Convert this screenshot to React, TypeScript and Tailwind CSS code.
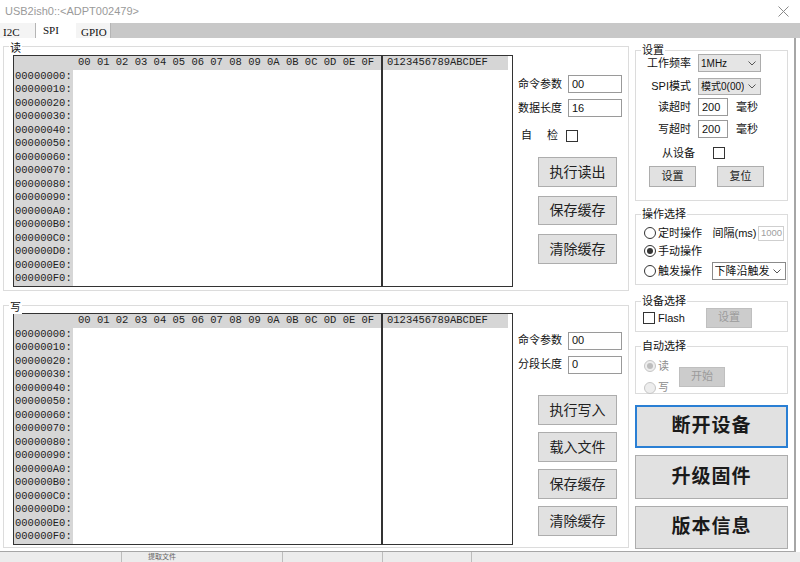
import type { ReactNode } from 'react'

const HEADER = Array.from({ length: 16 }, (_, i) => i.toString(16).toUpperCase().padStart(2, '0')).join(' ')
const ADDRS = Array.from({ length: 16 }, (_, i) => (i * 16).toString(16).toUpperCase().padStart(8, '0') + ':')

function Group({
  label,
  className = '',
  labelClass = '-top-[8px]',
  children,
}: {
  label: string
  className?: string
  labelClass?: string
  children?: ReactNode
}) {
  return (
    <div className={`relative border border-[#dcdcdc] ${className}`}>
      <span className={`absolute left-[5px] bg-white px-[1px] text-[11px] leading-[14px] text-[#111] ${labelClass}`}>
        {label}
      </span>
      {children}
    </div>
  )
}

function Btn({ children, className = '', disabled = false }: { children: ReactNode; className?: string; disabled?: boolean }) {
  return (
    <button
      className={`flex shrink-0 items-center justify-center border leading-none ${
        disabled ? 'border-[#bfbfbf] bg-[#cccccc] text-[#9b9b9b]' : 'border-[#adadad] bg-[#e1e1e1] text-[#222]'
      } ${className}`}
    >
      {children}
    </button>
  )
}

function Field({ value, className = '', disabled = false }: { value: string; className?: string; disabled?: boolean }) {
  return (
    <div
      className={`flex shrink-0 items-center overflow-hidden whitespace-nowrap border bg-white ${
        disabled ? 'border-[#cfcfcf] pl-[2px] text-[9.5px] text-[#a0a0a0]' : 'border-[#9a9a9a] pl-[3px] text-[11px]'
      } ${className}`}
    >
      {value}
    </div>
  )
}

function Checkbox({ className = '' }: { className?: string }) {
  return <span className={`block h-[12px] w-[12px] shrink-0 border border-[#333] bg-white ${className}`} />
}

function Radio({ checked = false, disabled = false }: { checked?: boolean; disabled?: boolean }) {
  return (
    <span
      className={`flex h-[12px] w-[12px] shrink-0 items-center justify-center rounded-full border ${
        disabled ? 'border-[#c6c6c6] bg-[#ededed]' : 'border-[#333] bg-white'
      }`}
    >
      {checked && <span className={`h-[6px] w-[6px] rounded-full ${disabled ? 'bg-[#bdbdbd]' : 'bg-[#333]'}`} />}
    </span>
  )
}

function Chevron() {
  return (
    <svg width="8" height="5" viewBox="0 0 8 5" className="shrink-0">
      <path d="M0.5 0.5 L4 4 L7.5 0.5" fill="none" stroke="#555" strokeWidth="1" />
    </svg>
  )
}

function Combo({ value, className = '', flat = false }: { value: string; className?: string; flat?: boolean }) {
  return (
    <div
      className={`flex shrink-0 items-center justify-between whitespace-nowrap border pl-[2px] pr-[4px] ${
        flat ? 'border-[#8a8a8a] bg-white text-[11px]' : 'border-[#acacac] bg-[#e5e5e5] text-[10px]'
      } ${className}`}
    >
      <span className="overflow-hidden">{value}</span>
      <Chevron />
    </div>
  )
}

// hex dump grid + ascii column
function HexView() {
  return (
    <div className="flex shrink-0 font-['Liberation_Mono',monospace] text-[10.5px] text-[#222]">
      <div className="flex h-[232px] w-[369px] border border-[#333] bg-white">
        <div className="flex w-[59px] flex-col bg-[#d6d6d6]">
          <div className="h-[13.5px] shrink-0" />
          {ADDRS.map((a) => (
            <div key={a} className="h-[13.5px] shrink-0 pl-[1px] leading-[13.5px]">
              {a}
            </div>
          ))}
        </div>
        <div className="flex-1">
          <div className="h-[13.5px] whitespace-pre bg-[#d6d6d6] pl-[5px] leading-[13.5px]">{HEADER}</div>
        </div>
      </div>
      <div className="h-[232px] w-[131px] border border-[#333] bg-white">
        <div className="mr-[4px] h-[13.5px] bg-[#d6d6d6] pl-[4px] leading-[13.5px]">0123456789ABCDEF</div>
      </div>
    </div>
  )
}

function BigButton({ children, focused = false, className = '' }: { children: ReactNode; focused?: boolean; className?: string }) {
  return (
    <button
      className={`flex w-[153px] items-center justify-center bg-[#e1e1e1] text-[19px] font-bold tracking-[1px] text-[#1a1a1a] ${
        focused ? 'border-2 border-[#2a7fd4]' : 'border border-[#adadad]'
      } ${className}`}
    >
      {children}
    </button>
  )
}

export default function App() {
  return (
    <div className="flex h-[562px] w-[800px] flex-col overflow-hidden bg-white font-['Liberation_Sans','Noto_Sans_CJK_SC',sans-serif] text-[#111]">
      {/* title bar */}
      <div className="flex h-[23px] shrink-0 items-center justify-between pl-[5px] pr-[11px]">
        <span className="text-[11px] text-[#9a9a9a]">USB2ish0::&lt;ADPT002479&gt;</span>
        <svg width="11" height="11" viewBox="0 0 11 11">
          <path d="M0.5 0.5 L10.5 10.5 M10.5 0.5 L0.5 10.5" stroke="#8a8a8a" strokeWidth="1" />
        </svg>
      </div>

      {/* tabs */}
      <div className="flex h-[15px] shrink-0 bg-[#c8c8c8] font-['Liberation_Serif',serif] text-[11px] leading-[12px] text-[#111]">
        <div className="w-[36px] border-r border-[#b5b5b5] bg-[#f4f4f4] pl-[3px] pt-[3px]">I2C</div>
        <div className="-mt-[1px] w-[40px] bg-white pl-[7px] pt-[2px]">SPI</div>
        <div className="w-[35px] border-r border-[#b5b5b5] bg-[#f4f4f4] pl-[5px] pt-[3px]">GPIO</div>
      </div>

      {/* SPI page */}
      <div className="flex h-[514px] w-[796px] shrink-0 border-b border-r-2 border-[#a6a6a6]">
        <div className="flex w-[632px] flex-col pl-[3px] pt-[8px]">
          <Group label="读" labelClass="-top-[6px]" className="flex h-[245px] w-[626px] pl-[9px] pt-[8px]">
            <HexView />
            <div className="ml-[5px] flex flex-col text-[11px]">
              <div className="mt-[20px] flex h-[18px] items-center">
                <span className="w-[50px]">命令参数</span>
                <Field value="00" className="h-[18px] w-[54px]" />
              </div>
              <div className="mt-[6px] flex h-[18px] items-center">
                <span className="w-[50px]">数据长度</span>
                <Field value="16" className="h-[18px] w-[54px]" />
              </div>
              <div className="mt-[13px] flex h-[11px] items-center">
                <span className="ml-[3px]">自</span>
                <span className="ml-[15px]">检</span>
                <Checkbox className="ml-[8px]" />
              </div>
              <Btn className="ml-[20px] mt-[16px] h-[29.5px] w-[79px] text-[14px]">执行读出</Btn>
              <Btn className="ml-[20px] mt-[9px] h-[29.5px] w-[79px] text-[14px]">保存缓存</Btn>
              <Btn className="ml-[20px] mt-[9px] h-[29.5px] w-[79px] text-[14px]">清除缓存</Btn>
            </div>
          </Group>

          <Group label="写" labelClass="-top-[6px]" className="mt-[14px] flex h-[243px] w-[626px] pl-[9px] pt-[7px]">
            <HexView />
            <div className="ml-[5px] flex flex-col text-[11px]">
              <div className="mt-[18.5px] flex h-[18px] items-center">
                <span className="w-[50px]">命令参数</span>
                <Field value="00" className="h-[18px] w-[54px]" />
              </div>
              <div className="mt-[6px] flex h-[18px] items-center">
                <span className="w-[50px]">分段长度</span>
                <Field value="0" className="h-[18px] w-[54px]" />
              </div>
              <Btn className="ml-[20px] mt-[21.5px] h-[29.5px] w-[79px] text-[14px]">执行写入</Btn>
              <Btn className="ml-[20px] mt-[7.5px] h-[29.5px] w-[79px] text-[14px]">载入文件</Btn>
              <Btn className="ml-[20px] mt-[7.5px] h-[29.5px] w-[79px] text-[14px]">保存缓存</Btn>
              <Btn className="ml-[20px] mt-[7.5px] h-[29.5px] w-[79px] text-[14px]">清除缓存</Btn>
            </div>
          </Group>
        </div>

        {/* right column */}
        <div className="flex w-[156px] flex-col pl-[3px] pt-[12px] text-[11px]">
          <Group label="设置" className="flex h-[151px] flex-col">
            <div className="mt-[3px] flex h-[18px] items-center">
              <span className="w-[55px] text-right">工作频率</span>
              <Combo value="1MHz" className="ml-[7px] h-[18px] w-[63px]" />
            </div>
            <div className="mt-[6px] flex h-[17px] items-center">
              <span className="w-[55px] text-right">SPI模式</span>
              <Combo value="模式0(00)" className="ml-[7px] h-[17px] w-[63px]" />
            </div>
            <div className="mt-[3px] flex h-[18px] items-center">
              <span className="w-[55px] text-right">读超时</span>
              <Field value="200" className="ml-[7px] h-[18px] w-[30px]" />
              <span className="ml-[8px]">毫秒</span>
            </div>
            <div className="mt-[4px] flex h-[18px] items-center">
              <span className="w-[55px] text-right">写超时</span>
              <Field value="200" className="ml-[7px] h-[18px] w-[30px]" />
              <span className="ml-[8px]">毫秒</span>
            </div>
            <div className="mt-[9px] flex h-[12px] items-center">
              <span className="ml-[26px]">从设备</span>
              <Checkbox className="ml-[18px]" />
            </div>
            <div className="mt-[7px] flex">
              <Btn className="ml-[13px] h-[21px] w-[47px] text-[11px]">设置</Btn>
              <Btn className="ml-[21px] h-[21px] w-[47px] text-[11px]">复位</Btn>
            </div>
          </Group>

          <Group label="操作选择" className="mt-[13px] flex h-[71px] flex-col pl-[8px]">
            <div className="mt-[9px] flex h-[18px] items-center">
              <Radio />
              <span className="ml-[2px] w-[54.5px]">定时操作</span>
              <span className="w-[45.5px] whitespace-nowrap">间隔(ms)</span>
              <Field value="1000" disabled className="h-[15px] w-[26px]" />
            </div>
            <div className="flex h-[18px] items-center">
              <Radio checked />
              <span className="ml-[2px]">手动操作</span>
            </div>
            <div className="mt-[2px] flex h-[18px] items-center">
              <Radio />
              <span className="ml-[2px] w-[53.5px]">触发操作</span>
              <Combo value="下降沿触发" flat className="h-[18px] w-[74px]" />
            </div>
          </Group>

          <Group label="设备选择" className="mt-[16px] h-[31px] pl-[7px]">
            <div className="mt-[6px] flex h-[19.5px] items-center">
              <Checkbox />
              <span className="ml-[3px] w-[48px]">Flash</span>
              <Btn disabled className="h-[19.5px] w-[46px] text-[11px]">设置</Btn>
            </div>
          </Group>

          <Group label="自动选择" className="mt-[14px] flex h-[48px] pl-[8px]">
            <div className="flex flex-col pt-[12px] text-[#8d8d8d]">
              <div className="flex h-[14px] items-center">
                <Radio checked disabled />
                <span className="ml-[2px]">读</span>
              </div>
              <div className="mt-[7.5px] flex h-[14px] items-center">
                <Radio disabled />
                <span className="ml-[2px]">写</span>
              </div>
            </div>
            <Btn disabled className="ml-[10px] mt-[19.5px] h-[20px] w-[46px] text-[11px]">开始</Btn>
          </Group>

          <BigButton focused className="mt-[11px] h-[43px]">断开设备</BigButton>
          <BigButton className="mt-[7px] h-[44px]">升级固件</BigButton>
          <BigButton className="mt-[7px] h-[43px]">版本信息</BigButton>
        </div>
      </div>

      {/* window underneath */}
      <div className="flex h-[10px] shrink-0 bg-[#ececec] text-[7px] leading-[10px] text-[#666]">
        <div className="w-[122px] border-r border-[#bdbdbd]" />
        <div className="w-[161px] border-r border-[#bdbdbd] pl-[26px]">提取文件</div>
        <div className="w-[100px] border-r border-[#bdbdbd]" />
        <div className="w-[89px] border-r border-[#bdbdbd]" />
      </div>
    </div>
  )
}
